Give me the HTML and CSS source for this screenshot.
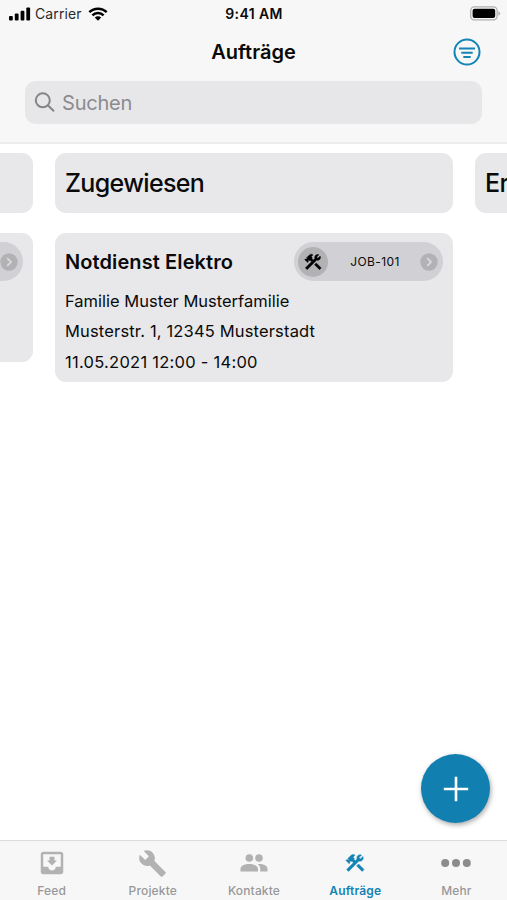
FILE: index.html
```
<!DOCTYPE html>
<html lang="de">

<head>
  <meta charset="UTF-8">
  <meta name="viewport" content="width=device-width, initial-scale=1.0">
  <title>Aufträge</title>
  <link rel="stylesheet" href="styles.css">
</head>

<body>
  <!-- Shared icons -->
  <svg class="icon-defs" width="0" height="0">
    <symbol id="icon-tools" viewBox="0 0 24 24">
      <path d="M13.78 15.17l2.12-2.12 6.01 6.01-2.12 2.12z" />
      <path d="M17.5 10c1.93 0 3.5-1.57 3.5-3.5 0-.58-.16-1.12-.41-1.6l-2.7 2.7-1.49-1.49 2.7-2.7c-.48-.25-1.02-.41-1.6-.41C15.57 3 14 4.57 14 6.5c0 .41.08.8.21 1.16l-1.85 1.85-1.78-1.78.71-.71-1.41-1.41L12 3.49c-1.17-1.17-3.07-1.17-4.24 0L4.22 7.03l1.41 1.41H2.81l-.71.71 3.54 3.54.71-.71V9.15l1.41 1.41.71-.71 1.78 1.78-7.41 7.41 2.12 2.12L16.34 9.79c.36.13.75.21 1.16.21z" />
    </symbol>
    <symbol id="icon-chevron" viewBox="0 0 18 18">
      <circle cx="9" cy="9" r="8.7" fill="#b2b2b5" />
      <path d="M7.2 5.2L11 9l-3.8 3.8" fill="none" stroke="#dcdce0" stroke-width="1.7" />
    </symbol>
  </svg>

  <!-- Header -->
  <header>
    <div class="status-bar">
      <div class="carrier">
        <svg class="signal" width="22" height="14" viewBox="0 0 22 14">
          <rect x="0" y="9" width="3.8" height="4.5" rx="1" />
          <rect x="5.8" y="6.6" width="3.8" height="6.9" rx="1" />
          <rect x="11.6" y="3.8" width="3.8" height="9.7" rx="1" />
          <rect x="17.3" y="0.6" width="3.8" height="12.9" rx="1" />
        </svg>
        <span>Carrier</span>
        <svg class="wifi" width="20" height="14" viewBox="0 0 20 14">
          <path d="M1.3 5.2a12.4 12.4 0 0 1 17.4 0M4.4 8.4a8 8 0 0 1 11.2 0" fill="none" stroke="#000" stroke-width="2.5" />
          <path d="M10 13.8l-3.2-3.2a4.6 4.6 0 0 1 6.4 0z" />
        </svg>
      </div>
      <span class="time">9:41 AM</span>
      <svg class="battery" width="31" height="15" viewBox="0 0 31 15">
        <rect x="0.7" y="0.9" width="26.4" height="13" rx="3.6" fill="#f7f7f7" stroke="#b0b0b0" stroke-width="1.3" />
        <rect x="2.6" y="2.8" width="22.6" height="9.2" rx="2" />
        <path d="M28.4 5.2c2.4.8 2.4 3.6 0 4.5z" fill="#b0b0b0" />
      </svg>
    </div>
    <div class="title-bar">
      <h1>Aufträge</h1>
      <svg class="filter" width="28" height="28" viewBox="0 0 28 28">
        <circle cx="14" cy="14" r="12.5" />
        <path d="M6 10.5h16M8.3 14.7h11.4M10.3 19h7.4" />
      </svg>
    </div>
    <div class="search">
      <svg width="21" height="21" viewBox="0 0 21 21">
        <circle cx="8.8" cy="8.3" r="7" />
        <path d="M13.8 13.3l6.2 6" />
      </svg>
      <span>Suchen</span>
    </div>
  </header>

  <!-- Board -->
  <main class="board">
    <section class="column">
      <div class="column-head"></div>
      <div class="card card-small">
        <div class="card-top">
          <div class="job">
            <svg class="chevron"><use href="#icon-chevron" /></svg>
          </div>
        </div>
      </div>
    </section>
    <section class="column">
      <div class="column-head">
        <h2>Zugewiesen</h2>
      </div>
      <div class="card">
        <div class="card-top">
          <h3>Notdienst Elektro</h3>
          <div class="job">
            <span class="job-icon"><svg><use href="#icon-tools" /></svg></span>
            <span class="job-id">JOB-101</span>
            <svg class="chevron"><use href="#icon-chevron" /></svg>
          </div>
        </div>
        <p class="name">Familie Muster Musterfamilie</p>
        <p class="address">Musterstr. 1, 12345 Musterstadt</p>
        <p class="date">11.05.2021 12:00 - 14:00</p>
      </div>
    </section>
    <section class="column">
      <div class="column-head">
        <h2>Er</h2>
      </div>
    </section>
  </main>

  <button class="add" aria-label="Neu">
    <svg width="26" height="26" viewBox="0 0 26 26">
      <path d="M13 .8v24.4M.8 13h24.4" />
    </svg>
  </button>

  <!-- Tabs -->
  <nav>
    <a class="tab">
      <svg width="30" height="30" viewBox="0 0 24 24">
        <path d="M19 3H4.99c-1.11 0-1.98.9-1.98 2L3 19c0 1.1.88 2 1.99 2H19c1.1 0 2-.9 2-2V5c0-1.1-.9-2-2-2zm0 12h-4c0 1.66-1.35 3-3 3s-3-1.34-3-3H4.99V5H19v10zm-3-5h-2V7h-4v3H8l4 4 4-4z" />
      </svg>
      <span>Feed</span>
    </a>
    <a class="tab">
      <svg width="29" height="29" viewBox="0 0 24 24">
        <path d="M22.7 19l-9.1-9.1c.9-2.3.4-5-1.5-6.9-2-2-5-2.4-7.4-1.3L9 6 6 9 1.6 4.7C.4 7.1.9 10.1 2.9 12.1c1.9 1.9 4.6 2.4 6.9 1.5l9.1 9.1c.4.4 1 .4 1.4 0l2.3-2.3c.5-.4.5-1.1.1-1.4z" />
      </svg>
      <span>Projekte</span>
    </a>
    <a class="tab">
      <svg width="28" height="18" viewBox="0 0 28 18">
        <circle cx="9.3" cy="4" r="3.8" />
        <circle cx="19" cy="4" r="3.8" />
        <path d="M.5 17.600v-2.800c0-3 4-4.800 8.800-4.800s8.700 1.800 8.700 4.800v2.800z" />
        <path d="M17.600 10.100c5.400-.5 9.900 1.500 9.900 4.700v2.800h-7.300v-2.800c0-2-1-3.500-2.600-4.700z" />
      </svg>
      <span>Kontakte</span>
    </a>
    <a class="tab active">
      <svg width="22" height="22"><use href="#icon-tools" /></svg>
      <span>Aufträge</span>
    </a>
    <a class="tab more">
      <svg width="30" height="10" viewBox="0 0 30 10">
        <circle cx="4.2" cy="5" r="4" />
        <circle cx="15" cy="5" r="4" />
        <circle cx="25.8" cy="5" r="4" />
      </svg>
      <span>Mehr</span>
    </a>
  </nav>
</body>

</html>
```
FILE: styles.css
```
* {
  margin: 0;
  padding: 0;
  box-sizing: border-box;
}

html, body {
  height: 100%;
  overflow: hidden;
}

body {
  display: flex;
  flex-direction: column;
  background: white;
  color: #0a0a0a;
  font-family: Inter, "Liberation Sans", sans-serif;
}

svg {
  display: block;
  flex: none;
}

.icon-defs {
  position: absolute;
}

/* Header */
header {
  height: 144px;
  flex: none;
  background: #f7f7f7;
  border-bottom: 2px solid #ededee;
}

.status-bar {
  display: grid;
  grid-template-columns: 1fr auto 1fr;
  align-items: center;
  height: 27px;
  padding: 0 6px 0 9px;
  font-size: 14px;
}

.carrier {
  display: flex;
  align-items: center;
  gap: 5px;
}

.carrier span {
  margin: 0 1px 0 -1px;
  color: #2a2a2a;
  letter-spacing: 0.1px;
}

.time {
  margin-right: 2px;
  font-weight: 600;
  font-size: 14px;
  letter-spacing: 0.4px;
}

.battery {
  justify-self: end;
}

.title-bar {
  display: grid;
  grid-template-columns: 1fr auto 1fr;
  align-items: center;
  height: 50px;
  padding: 0 26px;
}

h1 {
  grid-column: 2;
  font-size: 20px;
  font-weight: 600;
}

.filter {
  justify-self: end;
  fill: none;
  stroke: #1484b4;
  stroke-width: 2;
}

.search {
  display: flex;
  align-items: center;
  gap: 7px;
  height: 43px;
  margin: 4px 25px 0;
  padding: 0 9px;
  border-radius: 11px;
  background: #e7e7e9;
  color: #8b8b8f;
  font-size: 20px;
  letter-spacing: -0.2px;
}

.search svg {
  fill: none;
  stroke: #858589;
  stroke-width: 2;
}

/* Board */
.board {
  display: flex;
  flex: 1;
  gap: 22px;
  margin-left: -365px;
  padding-top: 8.5px;
  overflow: hidden;
}

.column {
  flex: none;
  width: 398px;
}

.column-head {
  display: flex;
  align-items: center;
  height: 60px;
  margin-bottom: 20px;
  padding: 0 10px;
  border-radius: 11px;
  background: #e8e8ea;
}

h2 {
  font-size: 25px;
  font-weight: 500;
  letter-spacing: -0.65px;
}

.card {
  height: 149px;
  padding: 9px 10px;
  border-radius: 11px;
  background: #e8e8ea;
}

.card-small {
  height: 129px;
}

.card-top {
  display: flex;
  align-items: center;
  height: 40px;
  margin-bottom: 4px;
}

h3 {
  font-size: 20px;
  font-weight: 600;
  letter-spacing: 0.1px;
}

.job {
  display: flex;
  align-items: center;
  justify-content: space-between;
  width: 149px;
  height: 39px;
  margin-left: auto;
  padding: 0 5px 0 4px;
  border-radius: 20px;
  background: #d1d1d5;
}

.job-icon {
  display: flex;
  align-items: center;
  justify-content: center;
  width: 30px;
  height: 30px;
  border-radius: 50%;
  background: #b2b2b5;
}

.job-icon svg {
  width: 20px;
  height: 20px;
  stroke: black;
  stroke-width: 0.5;
}

.job-id {
  margin-left: 2px;
  font-size: 12px;
  letter-spacing: 0.4px;
}

.chevron {
  width: 18px;
  height: 18px;
  margin-left: auto;
}

.job-id + .chevron {
  margin-left: 0;
}

.card p {
  font-size: 16.5px;
  line-height: 30.7px;
}

.card .address {
  letter-spacing: 0.16px;
}

.card .date {
  letter-spacing: 0.26px;
}

/* Add button */
.add {
  position: absolute;
  right: 17px;
  bottom: 77px;
  display: flex;
  align-items: center;
  justify-content: center;
  width: 69px;
  height: 69px;
  border: none;
  border-radius: 50%;
  background: #1180b0;
  box-shadow: 1px 2px 5px rgba(0, 0, 0, 0.35);
}

.add svg {
  stroke: white;
  stroke-width: 2.6;
}

/* Tabs */
nav {
  display: grid;
  grid-template-columns: repeat(5, 1fr);
  flex: none;
  height: 60px;
  padding-left: 1px;
  border-top: 1px solid #dcdcdc;
  background: #f7f7f7;
}

.tab {
  display: grid;
  grid-template-rows: 44px 12px;
  align-items: center;
  justify-items: center;
  color: #98989a;
  fill: #b2b2b3;
  font-size: 12px;
  font-weight: 500;
  line-height: 12px;
  letter-spacing: 0.15px;
}

.active {
  color: #1484b4;
  fill: #1484b4;
  font-weight: 600;
}

.active svg {
  stroke: #1484b4;
  stroke-width: 0.5;
}

.more {
  fill: #8c8c8d;
}
```
